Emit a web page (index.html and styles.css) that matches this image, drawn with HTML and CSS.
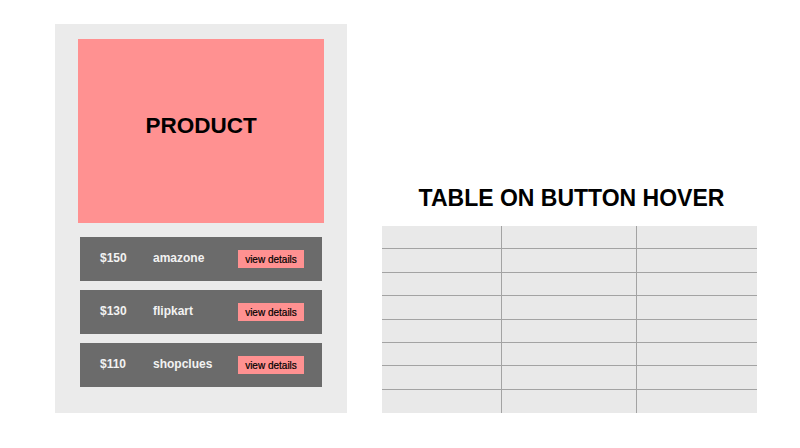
FILE: index.html
```html
<!DOCTYPE html>
<html>
<head>
<meta charset="utf-8">
<link rel="stylesheet" href="styles.css">
</head>
<body>
<div class="page">
  <div class="card">
    <div class="product">PRODUCT</div>
    <div class="offers">
      <div class="offer"><span class="price">$150</span><span class="store">amazone</span><button class="details">view details</button></div>
      <div class="offer"><span class="price">$130</span><span class="store">flipkart</span><button class="details">view details</button></div>
      <div class="offer"><span class="price">$110</span><span class="store">shopclues</span><button class="details">view details</button></div>
    </div>
  </div>
  <div class="side">
    <h1 class="title">TABLE ON BUTTON HOVER</h1>
    <div class="grid">
      <div class="cell"></div><div class="cell"></div><div class="cell"></div>
      <div class="cell"></div><div class="cell"></div><div class="cell"></div>
      <div class="cell"></div><div class="cell"></div><div class="cell"></div>
      <div class="cell"></div><div class="cell"></div><div class="cell"></div>
      <div class="cell"></div><div class="cell"></div><div class="cell"></div>
      <div class="cell"></div><div class="cell"></div><div class="cell"></div>
      <div class="cell"></div><div class="cell"></div><div class="cell"></div>
      <div class="cell last"></div><div class="cell last"></div><div class="cell last"></div>
    </div>
  </div>
</div>
</body>
</html>
```
FILE: styles.css
```css
* { box-sizing: border-box; }
html, body { margin: 0; padding: 0; background: #ffffff; }
body { font-family: "Liberation Sans", Arial, sans-serif; }

.page {
  display: flex;
  align-items: flex-end;
  padding: 24px 0 0 55px;
  gap: 35px;
}

.card {
  width: 292px;
  height: 389px;
  background: #ebebeb;
  padding: 15px 23px 0 23px;
}

.product {
  height: 184px;
  background: #ff9191;
  display: flex;
  align-items: center;
  justify-content: center;
  padding-bottom: 10px;
  font-size: 22.5px;
  font-weight: bold;
  color: #000;
}

.offers {
  display: flex;
  flex-direction: column;
  gap: 9px;
  margin: 14px 2px 0 2px;
}

.offer {
  height: 44px;
  background: #6b6b6b;
  display: flex;
  align-items: center;
  padding: 0 18px 0 20px;
  color: #f2f2f2;
  font-size: 12px;
  font-weight: bold;
}

.price { width: 53px; padding-bottom: 2px; }
.store { flex: 1; padding-bottom: 2px; }

.details {
  width: 66px;
  height: 18px;
  border: none;
  background: #ff9191;
  font-family: "Liberation Sans", Arial, sans-serif;
  font-size: 10px;
  color: #000;
  padding: 0;
  margin: 0;
  -webkit-text-stroke: 0.2px #000;
}

.side {
  width: 375px;
  display: flex;
  flex-direction: column;
}

.title {
  margin: 0 0 15px 0;
  font-size: 23px;
  line-height: 26px;
  font-weight: bold;
  text-align: center;
  color: #000;
  padding-left: 4px;
}

.grid {
  display: grid;
  grid-template-columns: 120px 135px 120px;
  grid-template-rows: repeat(8, 1fr);
  height: 187px;
  background: #e9e9e9;
}

.cell {
  border-bottom: 1px solid #a3a3a3;
  border-right: 1px solid #a3a3a3;
}
.cell:nth-child(3n) { border-right: none; }
.cell.last { border-bottom: none; }
```
